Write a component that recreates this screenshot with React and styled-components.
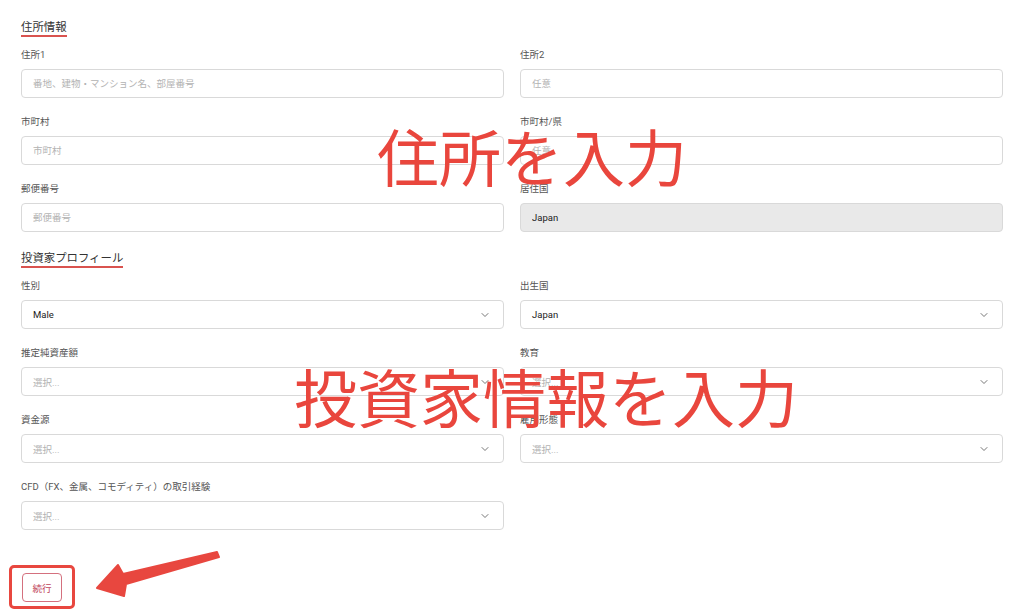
import React from "react";
import styled, { createGlobalStyle } from "styled-components";
import { ChevronDown } from "lucide-react";

const Global = createGlobalStyle`
  html, body { margin: 0; padding: 0; background: #fff; }
  body { font-family: Roboto, "Noto Sans CJK JP", sans-serif; color: #333; }
  * { box-sizing: border-box; }
`;

const Page = styled.div`
  position: relative;
  width: 1024px;
  height: 616px;
  overflow: hidden;
  padding: 18px 21px 0;
`;

const Grid = styled.div`
  display: grid;
  grid-template-columns: 1fr 1fr;
  column-gap: 16px;
  row-gap: 17px;
`;

const SectionTitle = styled.div`
  grid-column: 1 / -1;
  justify-self: start;
  font-family: "Noto Sans CJK JP", sans-serif;
  font-size: 11.4px;
  line-height: 16px;
  color: #333;
  padding-bottom: 1px;
  border-bottom: 2px solid #d9534f;
  margin-bottom: -6px;
`;

const Field = styled.div`
  display: flex;
  flex-direction: column;
  gap: 7px;
`;

const Label = styled.div`
  font-family: Roboto, "Noto Sans CJK JP", sans-serif;
  font-size: 9.5px;
  line-height: 14px;
  color: #555;
`;

const TextInput = styled.input`
  height: 29px;
  width: 100%;
  border: 1px solid #d9d9d9;
  border-radius: 4px;
  padding: 0 11px;
  font-family: Roboto, "Noto Sans CJK JP", sans-serif;
  font-size: 9.5px;
  font-weight: 400;
  color: #222;
  background: ${(p) => (p.disabled ? "#e9e9e9" : "#fff")};
  outline: none;
  &::placeholder { color: #b3b3b3; }
`;

const Select = styled.div`
  height: 29px;
  border: 1px solid #d9d9d9;
  border-radius: 4px;
  padding: 0 12px 0 11px;
  display: flex;
  align-items: center;
  justify-content: space-between;
  font-family: Roboto, "Noto Sans CJK JP", sans-serif;
  font-size: 9.5px;
  color: ${(p) => (p.$placeholder ? "#b3b3b3" : "#222")};
  background: #fff;
  svg { color: #666; }
`;

const Actions = styled.div`
  margin-top: 43px;
  display: flex;
`;

const Highlight = styled.div`
  margin-left: -12px;
  margin-top: -8px;
  padding: 5px 10px 4px 10px;
  border: 3px solid #e8473f;
  border-radius: 5px;
  display: inline-flex;
`;

const Button = styled.button`
  width: 40px;
  height: 29px;
  border: 1px solid #d4707e;
  border-radius: 4px;
  background: #fff;
  color: #c0445a;
  font-family: "Noto Sans CJK JP", sans-serif;
  font-size: 9.5px;
  padding: 0;
`;

const Overlay = styled.div`
  position: absolute;
  left: ${(p) => p.$x}px;
  top: ${(p) => p.$y}px;
  font-family: "Noto Sans CJK JP", sans-serif;
  font-size: ${(p) => p.$size}px;
  line-height: 1;
  color: #e9463d;
  white-space: nowrap;
  pointer-events: none;
`;

const Arrow = styled.svg`
  position: absolute;
  left: 90px;
  top: 545px;
`;

const TextField = ({ label, placeholder, value, disabled }) => (
  <Field>
    <Label>{label}</Label>
    <TextInput placeholder={placeholder} defaultValue={value} disabled={disabled} />
  </Field>
);

const SelectField = ({ label, value }) => (
  <Field>
    <Label>{label}</Label>
    <Select $placeholder={!value}>
      <span>{value || "選択..."}</span>
      <ChevronDown size={12} strokeWidth={1.8} />
    </Select>
  </Field>
);

export default function App() {
  return (
    <>
      <Global />
      <Page>
        <Grid>
          <SectionTitle>住所情報</SectionTitle>
          <TextField label="住所1" placeholder="番地、建物・マンション名、部屋番号" />
          <TextField label="住所2" placeholder="任意" />
          <TextField label="市町村" placeholder="市町村" />
          <TextField label="市町村/県" placeholder="任意" />
          <TextField label="郵便番号" placeholder="郵便番号" />
          <TextField label="居住国" value="Japan" disabled />
          <SectionTitle>投資家プロフィール</SectionTitle>
          <SelectField label="性別" value="Male" />
          <SelectField label="出生国" value="Japan" />
          <SelectField label="推定純資産額" />
          <SelectField label="教育" />
          <SelectField label="資金源" />
          <SelectField label="雇用形態" />
          <SelectField label="CFD（FX、金属、コモディティ）の取引経験" />
        </Grid>
        <Actions>
          <Highlight>
            <Button>続行</Button>
          </Highlight>
        </Actions>
        <Overlay $x={377} $y={124} $size={62}>住所を入力</Overlay>
        <Overlay $x={294} $y={363} $size={63}>投資家情報を入力</Overlay>
        <Arrow width="140" height="60" viewBox="0 0 140 60">
          <polygon
            points="7,43 28,20 33,29 127,7 129,12 36,39 34,51"
            fill="#e8473f"
            stroke="#e8473f"
            strokeWidth="2"
            strokeLinejoin="round"
          />
        </Arrow>
      </Page>
    </>
  );
}
